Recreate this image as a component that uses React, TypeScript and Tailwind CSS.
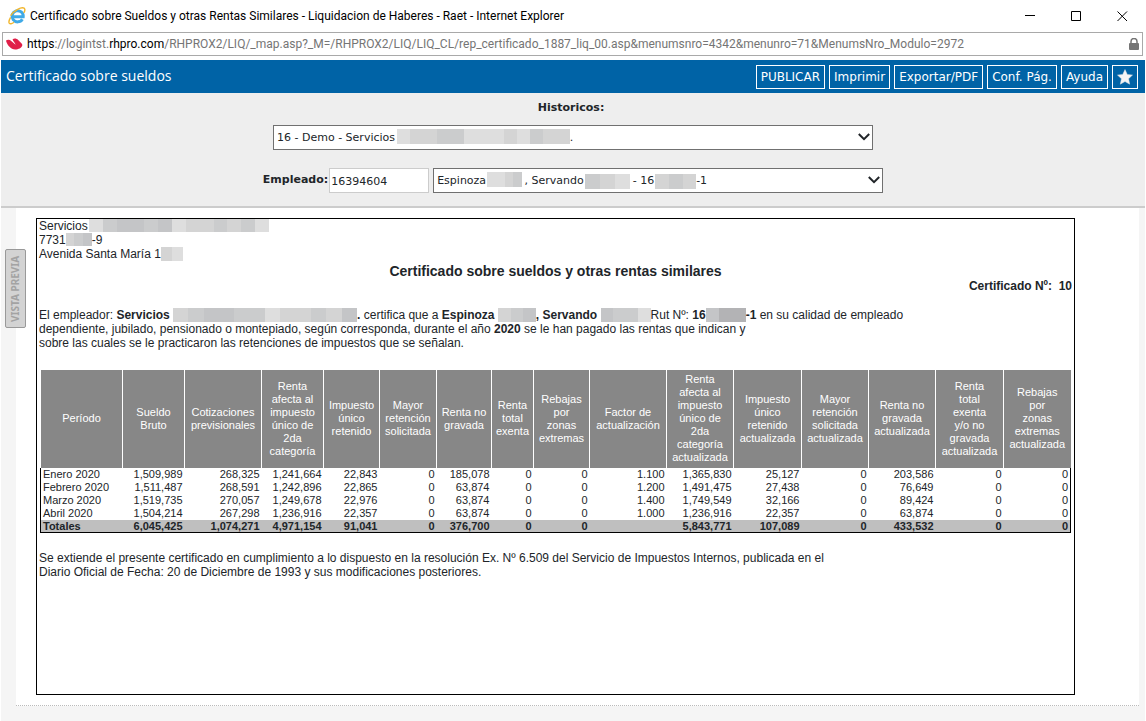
import { ReactNode } from "react";

const shades: Record<string, string> = {
    a: "bg-[#dedede]",
    b: "bg-[#d4d4d4]",
    c: "bg-[#cbcccd]",
    d: "bg-[#c4c5c7]",
    e: "bg-[#b3b3b5]",
};

interface MosaicProps {
    cells: string;
    className: string;
}

function Mosaic({ cells, className }: MosaicProps) {
    return (
        <span className={`inline-flex overflow-hidden align-top ${className}`} aria-hidden="true">
            {cells.split("").map((cell, i) => (
                <span key={i} className={`flex-1 ${shades[cell]}`} />
            ))}
        </span>
    );
}

const columns = [
    { label: "Período", width: "w-[82px]" },
    { label: "Sueldo\nBruto", width: "w-[62px]" },
    { label: "Cotizaciones\nprevisionales", width: "w-[77px]" },
    { label: "Renta\nafecta al\nimpuesto\núnico de\n2da\ncategoría", width: "w-[62px]" },
    { label: "Impuesto\núnico\nretenido", width: "w-[56px]" },
    { label: "Mayor\nretención\nsolicitada", width: "w-[57px]" },
    { label: "Renta no\ngravada", width: "w-[55px]" },
    { label: "Renta\ntotal\nexenta", width: "w-[42px]" },
    { label: "Rebajas\npor\nzonas\nextremas", width: "w-[56px]" },
    { label: "Factor de\nactualización", width: "w-[77px]" },
    { label: "Renta\nafecta al\nimpuesto\núnico de\n2da\ncategoría\nactualizada", width: "w-[67px]" },
    { label: "Impuesto\núnico\nretenido\nactualizada", width: "w-[68px]" },
    { label: "Mayor\nretención\nsolicitada\nactualizada", width: "w-[67px]" },
    { label: "Renta no\ngravada\nactualizada", width: "w-[67px]" },
    { label: "Renta\ntotal\nexenta\ny/o no\ngravada\nactualizada", width: "w-[68px]" },
    { label: "Rebajas\npor\nzonas\nextremas\nactualizada", width: "w-[67px]" },
];

const rows = [
    ["Enero 2020", "1,509,989", "268,325", "1,241,664", "22,843", "0", "185,078", "0", "0", "1.100", "1,365,830", "25,127", "0", "203,586", "0", "0"],
    ["Febrero 2020", "1,511,487", "268,591", "1,242,896", "22,865", "0", "63,874", "0", "0", "1.200", "1,491,475", "27,438", "0", "76,649", "0", "0"],
    ["Marzo 2020", "1,519,735", "270,057", "1,249,678", "22,976", "0", "63,874", "0", "0", "1.400", "1,749,549", "32,166", "0", "89,424", "0", "0"],
    ["Abril 2020", "1,504,214", "267,298", "1,236,916", "22,357", "0", "63,874", "0", "0", "1.000", "1,236,916", "22,357", "0", "63,874", "0", "0"],
];

const totals = ["Totales", "6,045,425", "1,074,271", "4,971,154", "91,041", "0", "376,700", "0", "0", "", "5,843,771", "107,089", "0", "433,532", "0", "0"];

const gap = (n: number) => "\u00a0".repeat(n);

function TitleBar() {
    return (
        <header className="flex h-8 items-center pl-2 font-['Roboto','Open_Sans',sans-serif] text-xs text-black">
            <svg width="18" height="18" viewBox="0 0 18 18" className="shrink-0">
                <path
                    d="M14.400 12.200A5.600 5.600 0 1 1 15.200 9.800H5.400"
                    fill="none"
                    stroke="#3fa9e6"
                    strokeWidth="3"
                />
                <path
                    d="M2.600 10.400C.2 14.400.4 17.200 3 16.700c1-.2 2-.7 3-1.500M2.600 8.600C6 3.400 13.400-.6 16.200 1.200c1.200 1 .6 3-.4 4.800"
                    fill="none"
                    stroke="#f2b62c"
                    strokeWidth="1.400"
                />
            </svg>
            <span className="ml-1">
                Certificado sobre Sueldos y otras Rentas Similares - Liquidacion de Haberes - Raet - Internet Explorer
            </span>
            <div className="ml-auto flex items-center pr-px">
                <button type="button" aria-label="Minimizar" className="flex w-[46px] justify-center">
                    <svg width="11" height="11" viewBox="0 0 11 11">
                        <path d="M0 4.500h10" stroke="#000" />
                    </svg>
                </button>
                <button type="button" aria-label="Maximizar" className="flex w-[46px] justify-center">
                    <svg width="11" height="11" viewBox="0 0 11 11">
                        <path d="M.5.5h9v9h-9z" fill="none" stroke="#000" />
                    </svg>
                </button>
                <button type="button" aria-label="Cerrar" className="flex w-[46px] justify-center">
                    <svg width="11" height="11" viewBox="0 0 11 11">
                        <path d="M.5.5l9.500 9.500M10 .5L.5 10" stroke="#000" />
                    </svg>
                </button>
            </div>
        </header>
    );
}

function AddressBar() {
    return (
        <div className="mr-[3px] ml-[2px] flex h-6 items-center border border-[#a9a9a9] pr-[3px] pl-[3px] font-['Roboto','Open_Sans',sans-serif] text-xs text-[#757575]">
            <svg width="17" height="12" viewBox="0 0 17 12" className="shrink-0">
                <path
                    d="M0 2.400C2 1.400 4 1.800 5.500 3.200L9.600 6.800C9 4.800 7 3.200 6.600 1.300 8.200 0 10.600.3 12.200 2c2 2.200 3.800 3.400 4.200 5-.6 3-4 4.500-7.200 4.500C5 11.500.6 6.400 0 2.400z"
                    fill="#e01f48"
                />
            </svg>
            <span className="ml-1">
                <span className="text-black">https</span>://logintst.<span className="text-black">rhpro.com</span>
                /RHPROX2/LIQ/_map.asp?_M=/RHPROX2/LIQ/LIQ_CL/rep_certificado_1887_liq_00.asp&menumsnro=4342&menunro=71&MenumsNro_Modulo=2972
            </span>
            <svg width="10" height="13" viewBox="0 0 10 13" className="ml-auto shrink-0">
                <path d="M2 6V3.500a3 3 0 0 1 6 0V6" fill="none" stroke="#757575" strokeWidth="1.500" />
                <rect y="5" width="10" height="7" rx="1" fill="#757575" />
            </svg>
        </div>
    );
}

const actions = ["PUBLICAR", "Imprimir", "Exportar/PDF", "Conf. Pág.", "Ayuda"];

function Toolbar() {
    return (
        <div className="mt-1 flex h-[33px] items-center bg-[#0063a6] pr-[7px] pl-[5px] text-white">
            <h1 className="pb-[2px] font-['Open_Sans','Noto_Sans',sans-serif] text-sm">Certificado sobre sueldos</h1>
            <div className="ml-auto flex gap-1 font-['DejaVu_Sans',Verdana,sans-serif] text-xs">
                {actions.map((action) => (
                    <button key={action} type="button" className="h-6 border border-white px-1">
                        {action}
                    </button>
                ))}
                <button type="button" aria-label="Favoritos" className="flex h-6 w-[26px] items-center justify-center border border-white">
                    <svg width="16" height="16" viewBox="0 0 16 16">
                        <path d="M8 .5l2.300 5 5.200.6-3.900 3.600 1.100 5.500L8 12.500l-4.700 2.700 1.100-5.500L.5 6.100l5.200-.6z" fill="#f4f4f4" stroke="#d5dde3" strokeWidth=".5" />
                    </svg>
                </button>
            </div>
        </div>
    );
}

interface SelectBoxProps {
    id: string;
    label: string;
    value: string;
    className: string;
    children: ReactNode;
}

function SelectBox({ id, label, value, className, children }: SelectBoxProps) {
    return (
        <div className={`relative ${className}`}>
            <select
                id={id}
                aria-label={label}
                className="block h-[25px] w-full appearance-none border border-[#707070] bg-white pt-[2px] pl-[3px] text-[11px] text-[#212529]"
            >
                <option>{value}</option>
            </select>
            {children}
            <svg width="12" height="8" viewBox="0 0 12 8" className="pointer-events-none absolute top-2 right-[3px]">
                <path d="M.8 1L6 6.200 11.200 1" fill="none" stroke="#212529" strokeWidth="2" />
            </svg>
        </div>
    );
}

function Filters() {
    return (
        <form className="flex flex-col items-center border-b-2 border-[#ccc] bg-[#eee] pt-2 pb-[13px] font-['DejaVu_Sans',Verdana,sans-serif] text-[11px] text-[#212529]">
            <label htmlFor="historicos" className="pr-1 font-bold leading-[14px]">
                Historicos:
            </label>
            <SelectBox
                id="historicos"
                label="Historicos"
                value={`16 - Demo - Servicios${gap(50)}.`}
                className="mt-[10px] w-[600px]"
            >
                <Mosaic cells="abbccaaabacbb" className="pointer-events-none absolute top-1 left-[124px] h-[15px] w-[173px]" />
            </SelectBox>
            <div className="mt-[18px] flex items-center">
                <label htmlFor="empleado" className="mr-px font-bold">
                    Empleado:
                </label>
                <input
                    id="empleado"
                    defaultValue="16394604"
                    className="h-[25px] w-[100px] border border-[#ccc] bg-white px-px pt-[2px] text-[11px]"
                />
                <SelectBox
                    id="nombre"
                    label="Nombre del empleado"
                    value={`Espinoza${gap(11)}, Servando${gap(13)} - 16${gap(12)}-1`}
                    className="ml-1 w-[450px]"
                >
                    <Mosaic cells="aabc" className="pointer-events-none absolute top-1 left-[54px] h-[15px] w-[35px]" />
                    <Mosaic cells="cba" className="pointer-events-none absolute top-[6px] left-[152px] h-[15px] w-[45px]" />
                    <Mosaic cells="bcb" className="pointer-events-none absolute top-[6px] left-[222px] h-[15px] w-[41px]" />
                </SelectBox>
            </div>
        </form>
    );
}

function IncomeTable() {
    return (
        <table className="w-full table-fixed border-collapse text-[11px] leading-[13px]">
            <thead>
                <tr className="h-[98px] bg-[#878787] text-white">
                    {columns.map((column, i) => (
                        <th
                            key={i}
                            scope="col"
                            className={`border-l border-white p-0 pb-px text-center align-middle font-normal whitespace-pre-line ${column.width}`}
                        >
                            {column.label}
                        </th>
                    ))}
                </tr>
            </thead>
            <tbody className="border-x border-black">
                {rows.map((row) => (
                    <tr key={row[0]}>
                        {row.map((value, i) => (
                            <td key={i} className={i === 0 ? "p-0 pl-[2px]" : "p-0 pr-[2px] text-right"}>
                                {value}
                            </td>
                        ))}
                    </tr>
                ))}
            </tbody>
            <tfoot className="border border-t-0 border-black">
                <tr className="bg-[#bfbfbf] leading-3 font-bold">
                    {totals.map((value, i) => (
                        <td key={i} className={i === 0 ? "p-0 pl-[2px]" : "p-0 pr-[2px] text-right"}>
                            {value}
                        </td>
                    ))}
                </tr>
            </tfoot>
        </table>
    );
}

function Certificate() {
    return (
        <article className="min-h-[477px] border border-black font-['Liberation_Sans',Arial,sans-serif] text-xs leading-[14px] text-[#212529]">
            <address className="pl-[2px] not-italic">
                <div>
                    Servicios <Mosaic cells="acddcdabbcbca" className="ml-[-2px] h-[13px] w-[180px]" />
                </div>
                <div>
                    7731
                    <Mosaic cells="bcd" className="h-[13px] w-[26px]" />
                    -9
                </div>
                <div>
                    Avenida Santa María 1
                    <Mosaic cells="ba" className="h-[14px] w-[22px]" />
                </div>
            </address>
            <h2 className="mt-[2px] text-center text-sm leading-4 font-bold">
                Certificado sobre sueldos y otras rentas similares
            </h2>
            <p className="pr-[2px] text-right font-bold">Certificado Nº:{gap(2)}10</p>
            <p className="mt-[15px] pl-[2px]">
                El empleador: <b>Servicios</b> <Mosaic cells="bcddccabbcbd" className="h-[14px] w-[184px]" />
                <b>.</b> certifica que a <b>Espinoza</b> <Mosaic cells="bcd" className="h-[14px] w-[38px]" />
                <b>, Servando</b> <Mosaic cells="dcca" className="h-[14px] w-[50px]" />
                Rut Nº: <b>16</b>
                <Mosaic cells="dee" className="h-[14px] w-[40px]" />
                <b>-1</b> en su calidad de empleado
                <br />
                dependiente, jubilado, pensionado o montepiado, según corresponda, durante el año <b>2020</b> se le han pagado las rentas que indican y
                <br />
                sobre las cuales se le practicaron las retenciones de impuestos que se señalan.
            </p>
            <div className="mt-5 mr-[3px] ml-[3px]">
                <IncomeTable />
            </div>
            <p className="mt-[18px] pl-[2px]">
                Se extiende el presente certificado en cumplimiento a lo dispuesto en la resolución Ex. Nº 6.509 del Servicio de Impuestos Internos, publicada en el
                <br />
                Diario Oficial de Fecha: 20 de Diciembre de 1993 y sus modificaciones posteriores.
            </p>
        </article>
    );
}

export default function App() {
    return (
        <div className="flex min-h-screen flex-col bg-white">
            <TitleBar />
            <AddressBar />
            <div className="mx-px flex flex-1 flex-col">
                <Toolbar />
                <Filters />
                <main className="relative flex-1 bg-[#f5f5f5] pr-[6px] pb-[15px] pl-[15px]">
                    <div className="border-b border-dotted border-[#bbb] bg-white pt-[10px] pr-16 pb-[10px] pl-5">
                        <Certificate />
                    </div>
                    <button
                        type="button"
                        className="absolute top-[41px] left-1 flex h-[79px] w-[21px] rotate-180 items-center justify-center rounded-xs border border-[#999] bg-[#d3d3d3] font-['Noto_Sans','Open_Sans',sans-serif] text-[10px] font-bold text-[#a3a3a3] [writing-mode:vertical-rl]"
                    >
                        VISTA PREVIA
                    </button>
                </main>
            </div>
        </div>
    );
}
